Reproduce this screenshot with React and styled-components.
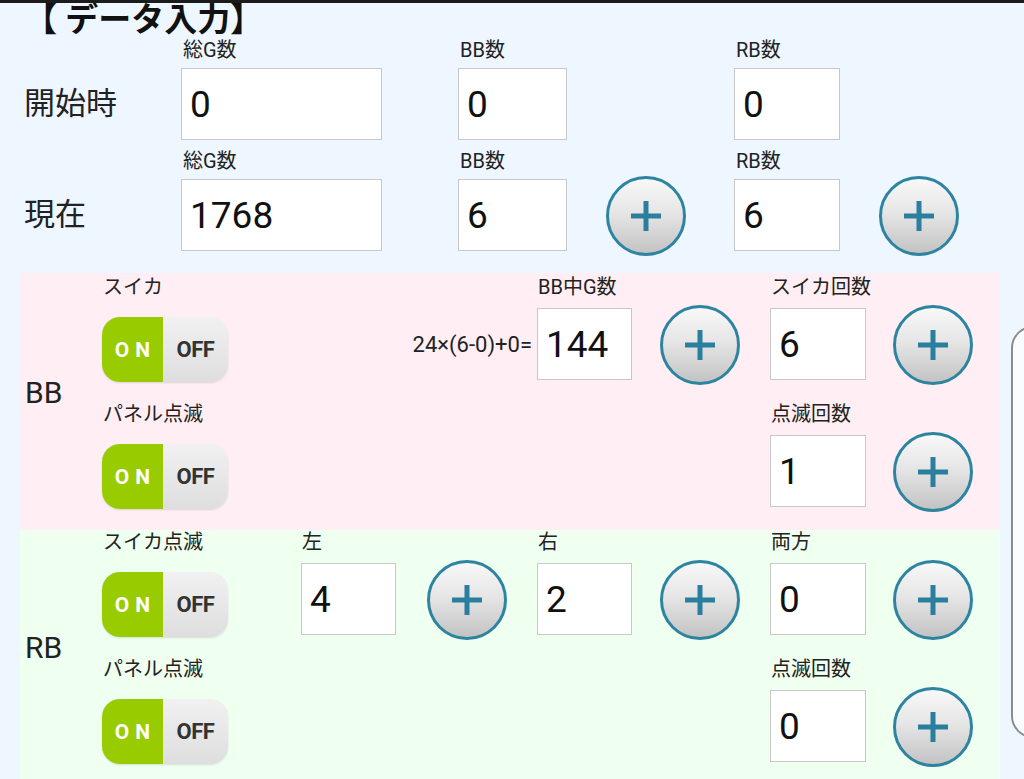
import React from 'react'
import styled, { createGlobalStyle } from 'styled-components'

const font = `Roboto, "Noto Sans CJK JP", sans-serif`

const GlobalStyle = createGlobalStyle`
    html, body {
        margin: 0;
        padding: 0;
        background: #eef6ff;
        overflow: hidden;
    }
    * {
        box-sizing: border-box;
    }
`

const Page = styled.div`
    position: relative;
    width: 1024px;
    height: 779px;
    overflow: hidden;
    background: #eef6ff;
    border-top: 3px solid #1c1c1c;
    font-family: ${font};
    color: #222;
`

const Title = styled.h1`
    margin: 0 0 1px;
    padding-left: 24px;
    font-size: 33px;
    line-height: 34px;
    font-weight: 700;
    color: #111;
    white-space: nowrap;
`

const TopBlock = styled.div`
    display: flex;
    flex-direction: column;
    gap: 9px;
    padding-left: 23px;
    margin-top: 1px;
`

const TopRow = styled.div`
    display: grid;
    grid-template-columns: 158px 277px 148px 128px 145px 80px;
    grid-template-rows: 24px 72px;
    row-gap: 6px;
`

const RowTitle = styled.div`
    grid-column: 1;
    grid-row: 2;
    align-self: center;
    font-size: 31px;
    line-height: 36px;
    padding-left: 1px;
`

const FieldLabel = styled.div`
    grid-column: ${p => p.$col};
    grid-row: 1;
    font-size: 20px;
    line-height: 24px;
    padding-left: 2px;
    white-space: nowrap;
`

const ValueBox = styled.div`
    grid-column: ${p => p.$col};
    grid-row: 2;
    width: ${p => p.$w}px;
    height: 72px;
    background: #fff;
    border: 1px solid #c8c8c8;
    display: flex;
    align-items: center;
    padding-left: 8px;
    font-size: 37px;
    color: #111;
`

const PlusButton = styled.button`
    grid-column: ${p => p.$col};
    grid-row: 2;
    align-self: center;
    justify-self: start;
    width: 80px;
    height: 80px;
    margin-top: 2px;
    padding: 0;
    border-radius: 50%;
    border: 3px solid #2d84a1;
    background: linear-gradient(#f8f8f8, #e6e6e6 45%, #c3c3c3);
    display: flex;
    align-items: center;
    justify-content: center;
    cursor: pointer;
`

const Section = styled.div`
    display: grid;
    grid-template-columns: 82px 1fr;
    width: 980px;
    margin: ${p => (p.$first ? '22px' : '0')} 0 0 20px;
    padding: ${p => (p.$first ? '2px 0 1px' : '0 0 3px')};
    background: ${p => p.$bg};
`

const SectionTitle = styled.div`
    align-self: center;
    padding: 0 0 18px 5px;
    font-size: 30px;
    line-height: 36px;
`

const SubRows = styled.div`
    display: flex;
    flex-direction: column;
`

const SubRow = styled.div`
    display: grid;
    grid-template-columns: 199px 126px 110px 123px 110px 123px 107px;
    grid-template-rows: 24px 72px;
    row-gap: 9px;
    padding-bottom: 22px;
    ${FieldLabel} {
        padding-left: 1px;
    }
`

const Formula = styled.div`
    grid-column: 2 / 4;
    grid-row: 2;
    justify-self: end;
    align-self: center;
    margin-right: 5px;
    font-size: 22px;
    color: #222;
    white-space: nowrap;
`

const Toggle = styled.div`
    grid-column: 1;
    grid-row: 2;
    align-self: start;
    margin-top: 9px;
    width: 126px;
    height: 65px;
    border-radius: 18px;
    overflow: hidden;
    display: flex;
    box-shadow: 0 1px 2px rgba(0, 0, 0, 0.12);
    font-family: Roboto, "Liberation Sans", sans-serif;
    font-weight: 700;
    font-size: 21px;
`

const ToggleOn = styled.div`
    width: 61px;
    background: #99cc00;
    color: #fff;
    display: flex;
    align-items: center;
    justify-content: center;
    letter-spacing: 6px;
    padding-left: 6px;
`

const ToggleOff = styled.div`
    flex: 1;
    background: linear-gradient(#f1f1f1, #dedede);
    color: #333;
    display: flex;
    align-items: center;
    justify-content: center;
    font-size: 22px;
    letter-spacing: -0.5px;
`

const SidePanel = styled.div`
    position: absolute;
    left: 1011px;
    top: 323px;
    width: 60px;
    height: 412px;
    border: 2px solid #8c8c8c;
    border-radius: 22px;
    background: #fbfcff;
`

function PlusIcon() {
    return (
        <svg width="32" height="32" viewBox="0 0 32 32">
            <rect x="1" y="13.5" width="30" height="5" fill="#2a7f9e" />
            <rect x="13.5" y="1" width="5" height="30" fill="#2a7f9e" />
        </svg>
    )
}

function Field({ col, label, value, w = 95 }) {
    return (
        <>
            <FieldLabel $col={col}>{label}</FieldLabel>
            <ValueBox $col={col} $w={w}>{value}</ValueBox>
        </>
    )
}

function Plus({ col }) {
    return (
        <PlusButton $col={col} type="button">
            <PlusIcon />
        </PlusButton>
    )
}

function OnOff({ label }) {
    return (
        <>
            <FieldLabel $col={1}>{label}</FieldLabel>
            <Toggle>
                <ToggleOn>ON</ToggleOn>
                <ToggleOff>OFF</ToggleOff>
            </Toggle>
        </>
    )
}

export default function App() {
    return (
        <>
            <GlobalStyle />
            <Page>
                <Title>【 データ入力】</Title>
                <TopBlock>
                    <TopRow>
                        <RowTitle>開始時</RowTitle>
                        <Field col={2} label="総G数" value="0" w={201} />
                        <Field col={3} label="BB数" value="0" w={109} />
                        <Field col={5} label="RB数" value="0" w={106} />
                    </TopRow>
                    <TopRow>
                        <RowTitle>現在</RowTitle>
                        <Field col={2} label="総G数" value="1768" w={201} />
                        <Field col={3} label="BB数" value="6" w={109} />
                        <Plus col={4} />
                        <Field col={5} label="RB数" value="6" w={106} />
                        <Plus col={6} />
                    </TopRow>
                </TopBlock>

                <Section $first $bg="#ffeef3">
                    <SectionTitle>BB</SectionTitle>
                    <SubRows>
                        <SubRow>
                            <OnOff label="スイカ" />
                            <Formula>24×(6-0)+0=</Formula>
                            <Field col={4} label="BB中G数" value="144" />
                            <Plus col={5} />
                            <Field col={6} label="スイカ回数" value="6" w={96} />
                            <Plus col={7} />
                        </SubRow>
                        <SubRow>
                            <OnOff label="パネル点滅" />
                            <Field col={6} label="点滅回数" value="1" w={96} />
                            <Plus col={7} />
                        </SubRow>
                    </SubRows>
                </Section>

                <Section $bg="#effff0">
                    <SectionTitle>RB</SectionTitle>
                    <SubRows>
                        <SubRow>
                            <OnOff label="スイカ点滅" />
                            <Field col={2} label="左" value="4" />
                            <Plus col={3} />
                            <Field col={4} label="右" value="2" />
                            <Plus col={5} />
                            <Field col={6} label="両方" value="0" w={96} />
                            <Plus col={7} />
                        </SubRow>
                        <SubRow>
                            <OnOff label="パネル点滅" />
                            <Field col={6} label="点滅回数" value="0" w={96} />
                            <Plus col={7} />
                        </SubRow>
                    </SubRows>
                </Section>

                <SidePanel />
            </Page>
        </>
    )
}
